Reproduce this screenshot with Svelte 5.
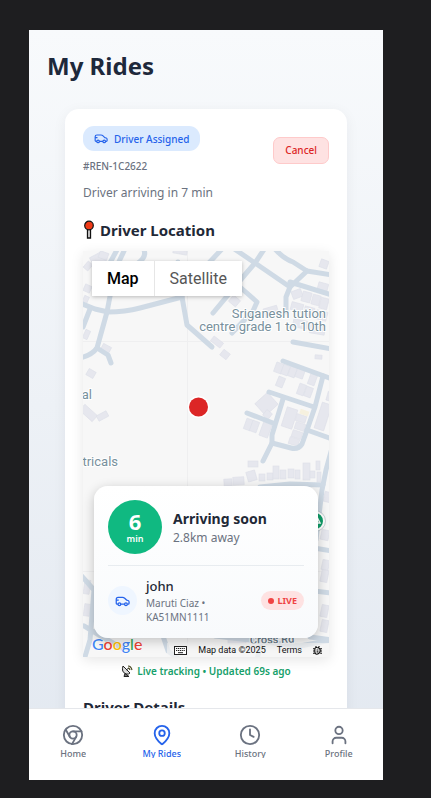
<script>
  const tabs = [
    { id: 'home', label: 'Home' },
    { id: 'rides', label: 'My Rides' },
    { id: 'history', label: 'History' },
    { id: 'profile', label: 'Profile' }
  ];
  let active = $state('rides');

  const wideRoads = [
    'M80 303L95 309L108 312Q125 312 140 308L182 297',
    'M178 262L182 297L187 325L212 347',
    'M124 251L115 270L107 312L97 348Q92 355 80 358',
    'M97 348L108 355L111 363',
    'M83 327L90 309',
    'M118 248L105 272',
    'M143 248Q148 256 138 263L128 272',
    'M265 248L255 263L243 277L213 313',
    'M222 249L205 267',
    'M233 248L255 263L290 287L286 297V312',
    'M275 249Q284 259 293 262L307 271L332 275',
    'M307 271L290 287M290 282L332 295',
    'M240 287L257 302L253 311L232 333',
    'M293 342L332 349',
    'M283 361L332 379',
    'M323 376L315 407L307 430L302 444Q298 450 291 448L272 443',
    'M269 392L314 407',
    'M283 399L272 435V443L263 461',
    'M247 413L273 423',
    'M307 430L332 439',
    'M332 448L326 470L322 490L316 540',
    'M260 487L290 484L323 485',
    'M314 548L332 551M314 591L332 593M310 637L332 640',
    'M80 574L94 590L90 640L84 660M84 626L104 638L122 648',
    'M163 636L168 651L180 660M262 638L257 660M215 636L300 646L332 640'
  ];
  // x, y, width, height, rotation in degrees
  const buildings = [
    [91, 254, 14, 10, -28], [84, 263, 8, 6, -50], [99, 252, 9, 7, 20],
    [84, 285, 7, 7, 24], [83, 296, 5, 8, 24], [84, 330, 5, 9, 24],
    [101, 345, 9, 9, 28], [87, 370, 8, 7, 30], [80, 409, 17, 8, 42],
    [97, 413, 11, 6, -28], [173, 250, 14, 4, 10], [230, 297, 9, 8, 40],
    [264, 307, 14, 9, -16], [292, 290, 10, 8, -20], [302, 292, 9, 10, 15],
    [312, 295, 8, 10, 15], [320, 298, 8, 11, 15], [291, 303, 12, 8, 15],
    [304, 307, 10, 9, 15], [316, 311, 11, 9, 15], [293, 320, 14, 8, 10],
    [310, 325, 15, 9, 10], [318, 283, 10, 7, 15], [211, 339, 12, 6, 38],
    [221, 351, 8, 7, 38], [315, 355, 7, 4, 4], [320, 260, 8, 8, 20],
    [275, 363, 8, 10, 20], [282, 365, 7, 10, 20], [289, 367, 7, 10, 20],
    [296, 369, 8, 9, 20], [277, 377, 7, 10, 22], [309, 374, 7, 11, 20],
    [298, 384, 7, 11, 20], [305, 387, 7, 10, 20], [258, 396, 17, 16, -42],
    [264, 411, 7, 7, 38], [284, 408, 11, 20, 18], [296, 415, 10, 7, 18],
    [295, 423, 10, 7, 18], [292, 431, 10, 7, 18], [289, 438, 10, 7, 18],
    [245, 419, 7, 11, 20], [251, 421, 7, 11, 20], [261, 423, 9, 14, 20],
    [318, 403, 10, 27, 18], [327, 392, 6, 9, 16], [248, 461, 10, 6, 0],
    [224, 479, 8, 7, -4], [233, 477, 11, 8, -4], [247, 471, 9, 10, -16],
    [259, 474, 6, 7, 0], [267, 473, 6, 7, 0], [273, 466, 6, 13, 0],
    [280, 470, 6, 9, 0], [288, 469, 6, 9, 0], [295, 470, 5, 9, 0],
    [303, 463, 7, 17, 0], [310, 471, 5, 7, 0], [316, 461, 4, 9, 0],
    [317, 472, 4, 10, 0], [324, 492, 7, 10, 14], [321, 530, 8, 10, 12],
    [322, 560, 7, 10, 12], [321, 570, 7, 12, 12], [321, 605, 7, 12, 12],
    [321, 620, 7, 12, 12], [84, 580, 6, 14, 8], [84, 604, 6, 12, 8],
    [228, 639, 18, 5, 0]
  ];
</script>

{#snippet car()}
  <svg class="car" viewBox="0 0 24 18" aria-hidden="true">
    <path d="M5 14H3.5Q2 14 2 12.5V6Q2 3 5 3H12Q14 3 15.500 4.500L18.500 7.500L21 8.200Q22.500 8.700 22.500 10.500V12.500Q22.500 14 21 14H20M9 14H15.500M3 7.500H6" />
    <circle cx="7" cy="14" r="2.200" /><circle cx="17.500" cy="14" r="2.200" />
  </svg>
{/snippet}

<div class="stage">
  <div class="phone">
    <main>
      <h1>My Rides</h1>
      <section class="ride">
        <header>
          <div>
            <span class="status">{@render car()}Driver Assigned</span>
            <p class="code">#REN-1C2622</p>
          </div>
          <button class="cancel">Cancel</button>
        </header>
        <p class="eta">Driver arriving in 7 min</p>
        <h2>
          <svg class="pin" viewBox="0 0 12 20" aria-hidden="true">
            <path d="M4.500 9V18H7.500V9" fill="#ddd" stroke="#111" stroke-width="1.300" />
            <circle cx="6" cy="5.500" r="4.300" fill="#f03a17" stroke="#111" stroke-width="1.200" />
          </svg>
          Driver Location
        </h2>

        <div class="map">
          <svg class="tiles" viewBox="83 251 246 406" preserveAspectRatio="xMidYMid slice" role="img" aria-label="Driver map">
            <rect x="0" y="200" width="500" height="500" fill="#f7f7f7" />
            <path d="M187.500 240V660M80 341.500H340M80 571.500H340" stroke="#efeff0" />
            <g fill="#e6e7ee" stroke="#dddfe8" stroke-width=".6">
              {#each buildings as [x, y, w, h, a]}
                <rect {x} {y} width={w} height={h} transform="rotate({a} {x + w / 2} {y + h / 2})" />
              {/each}
            </g>
            <rect x="300" y="410" width="9" height="5" fill="#f6f1df" transform="rotate(18 304 412)" />
            <g class="roads">
              {#each wideRoads as d}<path {d} />{/each}
            </g>
            <g class="places">
              <text x="326" y="318" text-anchor="end">Sriganesh tution</text>
              <text x="326" y="331" text-anchor="end">centre grade 1 to 10th</text>
              <text x="92" y="399" text-anchor="end">al</text>
              <text x="118" y="466" text-anchor="end">ctricals</text>
              <text class="street" x="250" y="644" transform="rotate(-2 250 644)">Cross Rd</text>
            </g>
            <circle cx="315" cy="521" r="9" fill="#0f9d68" stroke="#fff" stroke-width="2" />
            <circle cx="315" cy="521" r="10.500" fill="none" stroke="#b7c4ca" stroke-width=".7" />
            <path d="M317 517L320 523H316" fill="none" stroke="#fff" stroke-width="1.500" />
            <circle cx="198.500" cy="407" r="11" fill="#fff" />
            <circle cx="198.500" cy="407" r="9.500" fill="#dc2626" />
          </svg>
          <div class="types">
            <button class="on">Map</button><button>Satellite</button>
          </div>
          <div class="credits">
            <svg class="google" viewBox="0 0 54 22" role="img" aria-label="Google">
              <text y="15"><tspan fill="#4285f4">G</tspan><tspan fill="#ea4335">o</tspan><tspan fill="#fbbc05">o</tspan><tspan fill="#4285f4">g</tspan><tspan fill="#34a853">l</tspan><tspan fill="#ea4335">e</tspan></text>
            </svg>
            <div class="legal">
              <button aria-label="Keyboard shortcuts">
                <svg width="13" height="9" viewBox="0 0 13 9" aria-hidden="true">
                  <rect x=".5" y=".5" width="12" height="8" fill="#fff" stroke="#222" />
                  <path d="M2 2.500H11M2 4.500H11" stroke="#222" stroke-width="1.200" stroke-dasharray="1.200 .7" /><path d="M4 6.700H9" stroke="#222" />
                </svg>
              </button>
              <span>Map data ©2025</span>
              <a href="#terms">Terms</a>
              <button aria-label="Report a map error">
                <svg width="9" height="9" viewBox="0 0 10 10" aria-hidden="true">
                  <path d="M5 2Q8 2 8 5T5 9T2 5T5 2M3 0L4 2M7 0L6 2M0 3H2M0 5.500H2M0 8H2M8 3H10M8 5.500H10M8 8H10M4 4.500H6M4 6.500H6" fill="none" stroke="#111" stroke-width="1.200" />
                </svg>
              </button>
            </div>
          </div>

          <div class="arrival">
            <div class="row top">
              <div class="minutes"><strong>6</strong><span>min</span></div>
              <div>
                <h3>Arriving soon</h3>
                <p class="away">2.8km away</p>
              </div>
            </div>
            <div class="row driver">
              <span class="avatar">{@render car()}</span>
              <div class="who">
                <p class="name">john</p>
                <p class="vehicle">Maruti Ciaz •<br />KA51MN1111</p>
              </div>
              <span class="live"><i></i>LIVE</span>
            </div>
          </div>
        </div>

        <p class="tracking">
          <svg width="12" height="12" viewBox="0 0 12 12" aria-hidden="true">
            <path d="M2 1Q0 7 5 9Q8 9.500 9 8Z" fill="#ddd" stroke="#222" />
            <path d="M3 11.500L4 8.500L8 11.500Z" fill="#777" stroke="#222" />
            <path d="M5 5L8 3" stroke="#222" />
            <path d="M7 1Q10 1 11 5M7 3Q8.500 3 9 5" fill="none" stroke="#4b4a24" stroke-width="1.200" />
          </svg>
          Live tracking • Updated 69s ago
        </p>
        <h2 class="details">Driver Details</h2>
      </section>
    </main>

    <nav>
      {#each tabs as tab}
        <a href="#{tab.id}" class:active={active === tab.id} onclick={() => (active = tab.id)}>
          <svg viewBox="0 0 24 24" aria-hidden="true">
            {#if tab.id === 'home'}
              <circle cx="12" cy="12" r="10" /><circle cx="12" cy="12" r="4" />
              <path d="M21.170 8H12M3.950 6.060L8.540 14M10.880 21.940L15.460 14" />
            {:else if tab.id === 'rides'}
              <path d="M20 10C20 14.990 14.460 20.190 12.600 21.800A1 1 0 0 1 11.400 21.800C9.540 20.190 4 14.990 4 10A8 8 0 0 1 20 10" /><circle cx="12" cy="10" r="3" />
            {:else if tab.id === 'history'}
              <circle cx="12" cy="12" r="10" /><path d="M12 6V12L16 14" />
            {:else}
              <path d="M19 21V19A4 4 0 0 0 15 15H9A4 4 0 0 0 5 19V21" /><circle cx="12" cy="7" r="4" />
            {/if}
          </svg>
          <span>{tab.label}</span>
        </a>
      {/each}
    </nav>
  </div>
</div>

<style>
  :global(body) { background: #1e1e20; }
  * { box-sizing: border-box; }
  h1, h2, h3, p { margin: 0; }
  button { font: inherit; border: 0; padding: 0; background: none; cursor: pointer; }
  a { color: inherit; text-decoration: none; }
  svg { flex: none; }
  .stage { height: 100vh; padding: 30px 48px 18px 29px; font-family: "Noto Sans", "Open Sans", sans-serif; }
  .phone { height: 100%; display: flex; flex-direction: column; overflow: hidden; background: linear-gradient(#f8fafc, #e2e8f0); }
  main { flex: 1; min-height: 0; overflow: hidden; padding: 18px 36px 0; }
  h1 { margin: 0 -18px 25px; font-size: 24px; line-height: 36px; color: #1e293b; }
  .ride { background: #fff; border-radius: 14px; padding: 17px 18px; box-shadow: 0 3px 14px rgba(30, 41, 59, .06); }
  header { display: flex; justify-content: space-between; align-items: center; margin-bottom: 10px; }
  .car { fill: none; stroke: currentColor; stroke-width: 2; stroke-linejoin: round; }
  .status { display: flex; align-items: center; gap: 6px; height: 25px; padding: 0 11px; border-radius: 11px; background: #dbeafe; color: #2563eb; font-size: 10px; font-weight: 500; }
  .status .car { width: 14px; height: 11px; }
  .code { margin-top: 7px; font-size: 10px; line-height: 16px; font-weight: 500; color: #6b7280; }
  .cancel { height: 27px; padding: 0 11px; border: 1px solid #fecaca; border-radius: 7px; background: #fee2e2; color: #dc2626; font-size: 10px; font-weight: 500; }
  .eta { font-size: 12px; line-height: 18px; color: #6b7280; }
  h2 { display: flex; align-items: center; gap: 5px; margin: 17px 0 10px; font-size: 15px; line-height: 22px; color: #1f2937; }
  .pin { width: 12px; height: 20px; }
  .map { position: relative; height: 406px; box-shadow: 0 3px 12px rgba(0, 0, 0, .1); }
  .tiles { display: block; width: 100%; height: 100%; }
  .roads { fill: none; stroke: #cfdae5; stroke-width: 5; stroke-linejoin: round; stroke-linecap: round; }
  .places { font: 13px Roboto, sans-serif; fill: #78909c; stroke: #fff; stroke-width: 2; paint-order: stroke; }
  .places .street { fill: #647887; font-weight: 500; font-size: 11px; }
  .types { position: absolute; left: 9px; top: 10px; display: flex; height: 35px; background: #fff; box-shadow: 0 1px 4px rgba(0, 0, 0, .25); font: 16px Roboto, sans-serif; }
  .types button { padding: 0 15px; color: #565656; }
  .types .on { color: #000; font-weight: 500; border-right: 1px solid #e6e6e6; }
  .credits { position: absolute; left: 9px; right: 0; bottom: 0; display: flex; justify-content: space-between; align-items: flex-end; }
  .google { width: 54px; height: 22px; font: 500 16px Lato, sans-serif; stroke: #fff; stroke-width: 1; paint-order: stroke; }
  .legal { display: flex; align-items: center; gap: 11px; height: 14px; padding: 0 7px; background: rgba(245, 245, 245, .7); font: 9px Roboto, sans-serif; color: #111; }
  .legal button { display: flex; }
  .arrival { position: absolute; left: 11px; right: 11px; bottom: 19px; padding: 14px; border-radius: 14px; background: linear-gradient(#fff, #f8fafc); box-shadow: 0 3px 12px rgba(0, 0, 0, .22); }
  .row { display: flex; align-items: center; }
  .top { gap: 11px; padding-bottom: 11px; border-bottom: 1px solid #e8ecf0; }
  .minutes { display: flex; flex-direction: column; align-items: center; justify-content: center; width: 54px; height: 54px; border-radius: 50%; background: #10b981; color: #fff; }
  .minutes strong { font-size: 22px; line-height: 24px; }
  .minutes span { font-size: 9px; line-height: 12px; font-weight: 600; }
  h3 { font-size: 14px; line-height: 20px; color: #1f2937; }
  .away { font-size: 12px; line-height: 17px; color: #6b7280; }
  .driver { padding-top: 11px; gap: 9px; }
  .avatar { display: flex; align-items: center; justify-content: center; width: 29px; height: 29px; border-radius: 50%; background: #eff6ff; color: #2563eb; }
  .avatar .car { width: 15px; height: 12px; }
  .who { flex: 1; }
  .name { font-size: 13px; line-height: 19px; font-weight: 500; color: #1f2937; }
  .vehicle { font-size: 10px; line-height: 14px; color: #6b7280; }
  .live { display: flex; align-items: center; gap: 4px; height: 19px; padding: 0 7px; border-radius: 10px; background: #fee2e2; color: #ef4444; font-size: 9px; font-weight: 700; }
  .live i { width: 6px; height: 6px; border-radius: 50%; background: #ef4444; }
  .tracking { display: flex; align-items: center; justify-content: center; gap: 4px; margin-top: 6px; font-size: 10px; line-height: 16px; font-weight: 600; color: #16a06a; }
  .details { margin-top: 17px; }
  nav { display: flex; height: 72px; padding-top: 15px; background: #fff; border-top: 1px solid #e5e7eb; }
  nav a { flex: 1; display: flex; flex-direction: column; align-items: center; gap: 3px; color: #6b7280; }
  nav svg { width: 22px; height: 22px; fill: none; stroke: currentColor; stroke-width: 2; stroke-linecap: round; stroke-linejoin: round; }
  nav span { height: 9px; overflow: hidden; font-size: 9px; line-height: 9px; font-weight: 500; }
  nav .active { color: #2563eb; }
</style>
